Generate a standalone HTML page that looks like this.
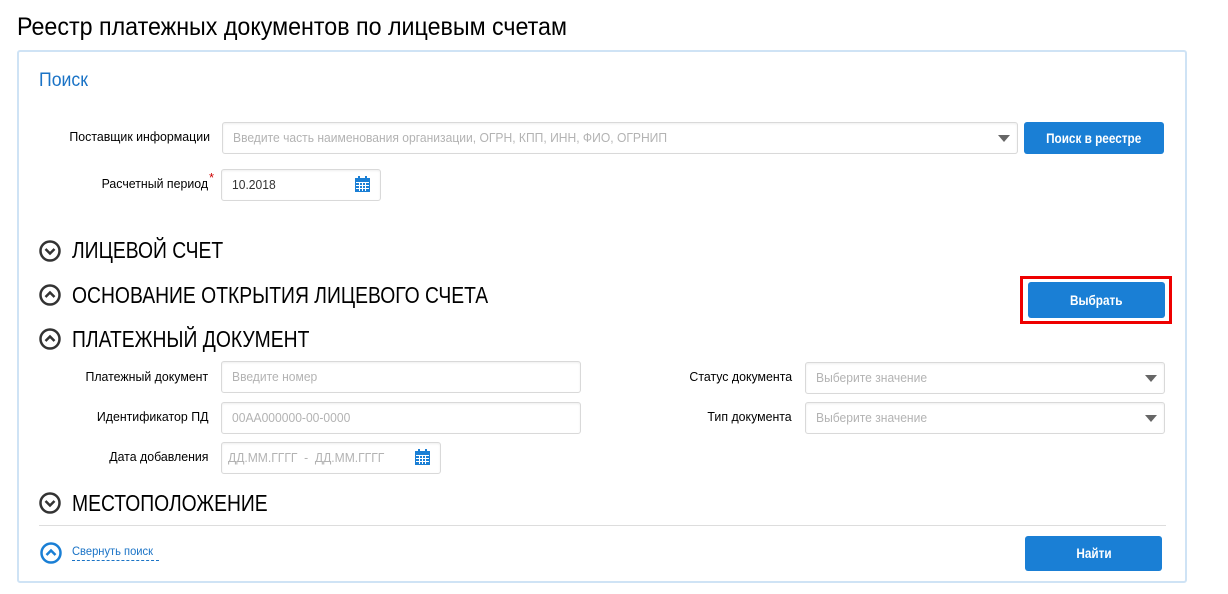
<!DOCTYPE html>
<html><head><meta charset="utf-8"><style>
*{box-sizing:border-box;margin:0;padding:0}
body{width:1228px;height:594px;background:#fff;font-family:"Liberation Sans",sans-serif;position:relative;overflow:hidden;color:#000}
.a{position:absolute;white-space:nowrap}
.c{display:inline-block;transform:scaleX(.93);transform-origin:left center}
.r .c{transform-origin:right center;transform:scaleX(.95)}
.lbl{font-size:13px;text-align:right;width:200px}
.inp{position:absolute;border:1px solid #d9d9d9;border-radius:3px;background:#fff;box-shadow:inset 0 1px 2px #eee;font-size:13px;color:#b3b3b3;padding-left:10px}
.btn{position:absolute;background:#1a7fd5;color:#fff;border-radius:3px;font-size:14px;font-weight:bold;text-align:center}
.btn .c{transform:scaleX(.84);transform-origin:center}
.tri{position:absolute;width:0;height:0;border-left:6px solid transparent;border-right:6px solid transparent;border-top:7px solid #666}
.sec{font-size:23px}
.sec .c{transform:scaleX(.84)}
.ic{position:absolute;width:22px;height:22px}
</style></head><body>
<div class="a" style="left:17px;top:13px;font-size:25px"><span class="c">Реестр платежных документов по лицевым счетам</span></div>
<div class="a" style="left:17px;top:50px;width:1170px;height:533px;border:2px solid #cfe3f5;border-radius:3px"></div>
<div class="a" style="left:39px;top:70px;font-size:19px;color:#1a73c6"><span class="c">Поиск</span></div>

<div class="a lbl r" style="left:10px;top:129px"><span class="c">Поставщик информации</span></div>
<div class="inp" style="left:222px;top:122px;width:796px;height:32px;line-height:30px"><span class="c">Введите часть наименования организации, ОГРН, КПП, ИНН, ФИО, ОГРНИП</span></div>
<div class="tri" style="left:998px;top:135px"></div>
<div class="btn" style="left:1024px;top:122px;width:140px;height:32px;line-height:32px"><span class="c">Поиск в реестре</span></div>

<div class="a lbl r" style="left:8px;top:176px"><span class="c">Расчетный период</span></div>
<div class="a" style="left:209px;top:170px;color:#c00;font-size:13px">*</div>
<div class="inp" style="left:221px;top:169px;width:160px;height:32px;line-height:30px;color:#333"><span class="c">10.2018</span></div>
<svg class="a" style="left:355px;top:176px" width="15" height="16" viewBox="0 0 15 16"><rect x="0" y="2" width="15" height="14" fill="#1a7fd5"/><rect x="3" y="0" width="2" height="4" fill="#1a7fd5"/><rect x="10" y="0" width="2" height="4" fill="#1a7fd5"/><g fill="#fff"><rect x="1" y="6" width="13" height="1"/><rect x="1" y="9" width="13" height="1"/><rect x="1" y="12" width="13" height="1"/><rect x="4" y="6" width="1" height="9"/><rect x="7" y="6" width="1" height="9"/><rect x="10" y="6" width="1" height="9"/></g></svg>

<svg class="ic" style="left:39px;top:240px" viewBox="0 0 22 22"><circle cx="11" cy="11" r="9.5" fill="none" stroke="#333" stroke-width="2.5"/><path d="M6.5 9 L11 13.5 L15.5 9" fill="none" stroke="#333" stroke-width="2.5"/></svg>
<div class="a sec" style="left:72px;top:237px"><span class="c">ЛИЦЕВОЙ СЧЕТ</span></div>
<svg class="ic" style="left:39px;top:284px" viewBox="0 0 22 22"><circle cx="11" cy="11" r="9.5" fill="none" stroke="#333" stroke-width="2.5"/><path d="M6.5 13 L11 8.5 L15.5 13" fill="none" stroke="#333" stroke-width="2.5"/></svg>
<div class="a sec" style="left:72px;top:282px"><span class="c">ОСНОВАНИЕ ОТКРЫТИЯ ЛИЦЕВОГО СЧЕТА</span></div>
<div class="a" style="left:1020px;top:276px;width:152px;height:48px;border:3px solid #e00"></div>
<div class="btn" style="left:1028px;top:282px;width:137px;height:36px;line-height:36px"><span class="c">Выбрать</span></div>

<svg class="ic" style="left:39px;top:328px" viewBox="0 0 22 22"><circle cx="11" cy="11" r="9.5" fill="none" stroke="#333" stroke-width="2.5"/><path d="M6.5 13 L11 8.5 L15.5 13" fill="none" stroke="#333" stroke-width="2.5"/></svg>
<div class="a sec" style="left:72px;top:326px"><span class="c">ПЛАТЕЖНЫЙ ДОКУМЕНТ</span></div>

<div class="a lbl r" style="left:8px;top:369px"><span class="c">Платежный документ</span></div>
<div class="inp" style="left:221px;top:361px;width:360px;height:32px;line-height:30px"><span class="c">Введите номер</span></div>
<div class="a lbl r" style="left:8px;top:409px"><span class="c">Идентификатор ПД</span></div>
<div class="inp" style="left:221px;top:402px;width:360px;height:32px;line-height:30px"><span class="c">00АА000000-00-0000</span></div>
<div class="a lbl r" style="left:8px;top:449px"><span class="c">Дата добавления</span></div>
<div class="inp" style="left:221px;top:442px;width:220px;height:32px;line-height:30px;padding-left:6px"><span class="c">ДД.ММ.ГГГГ &nbsp;- &nbsp;ДД.ММ.ГГГГ</span></div>
<svg class="a" style="left:415px;top:449px" width="15" height="16" viewBox="0 0 15 16"><rect x="0" y="2" width="15" height="14" fill="#1a7fd5"/><rect x="3" y="0" width="2" height="4" fill="#1a7fd5"/><rect x="10" y="0" width="2" height="4" fill="#1a7fd5"/><g fill="#fff"><rect x="1" y="6" width="13" height="1"/><rect x="1" y="9" width="13" height="1"/><rect x="1" y="12" width="13" height="1"/><rect x="4" y="6" width="1" height="9"/><rect x="7" y="6" width="1" height="9"/><rect x="10" y="6" width="1" height="9"/></g></svg>

<div class="a lbl r" style="left:592px;top:369px"><span class="c">Статус документа</span></div>
<div class="inp" style="left:805px;top:362px;width:360px;height:32px;line-height:30px"><span class="c">Выберите значение</span></div>
<div class="tri" style="left:1145px;top:375px"></div>
<div class="a lbl r" style="left:592px;top:409px"><span class="c">Тип документа</span></div>
<div class="inp" style="left:805px;top:402px;width:360px;height:32px;line-height:30px"><span class="c">Выберите значение</span></div>
<div class="tri" style="left:1145px;top:415px"></div>

<svg class="ic" style="left:39px;top:492px" viewBox="0 0 22 22"><circle cx="11" cy="11" r="9.5" fill="none" stroke="#333" stroke-width="2.5"/><path d="M6.5 9 L11 13.5 L15.5 9" fill="none" stroke="#333" stroke-width="2.5"/></svg>
<div class="a sec" style="left:72px;top:490px"><span class="c">МЕСТОПОЛОЖЕНИЕ</span></div>
<div class="a" style="left:39px;top:525px;width:1127px;height:1px;background:#ddd"></div>

<svg class="ic" style="left:40px;top:542px" viewBox="0 0 22 22"><circle cx="11" cy="11" r="9.5" fill="none" stroke="#1a7fd5" stroke-width="2.5"/><path d="M6.5 13 L11 8.5 L15.5 13" fill="none" stroke="#1a7fd5" stroke-width="2.5"/></svg>
<div class="a" style="left:72px;top:544px;font-size:12px;color:#1a73c6;border-bottom:1px dashed #1a73c6;width:87px;height:17px"><span class="c">Свернуть поиск</span></div>
<div class="btn" style="left:1025px;top:536px;width:137px;height:35px;line-height:35px"><span class="c">Найти</span></div>
</body></html>
